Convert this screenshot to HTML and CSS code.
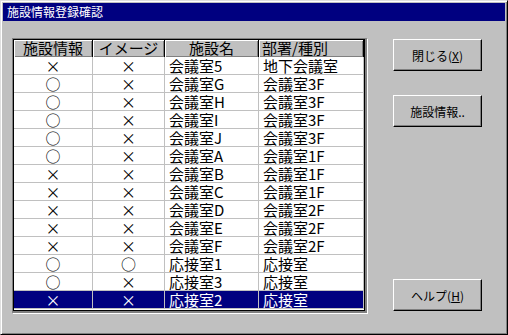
FILE: index.html
```html
<!DOCTYPE html>
<html lang="ja">
<head>
    <meta charset="UTF-8">
    <title>施設情報登録確認</title>
    <link rel="stylesheet" href="styles.css">
</head>
<body>
    <div class="window">
        <div class="titlebar">施設情報登録確認</div>
        <div class="client">
            <div class="list-frame">
                <div class="list">
                    <div class="row head">
                        <div class="cell center">施設情報</div>
                        <div class="cell center">イメージ</div>
                        <div class="cell center">施設名</div>
                        <div class="cell">部署/種別</div>
                    </div>
                    <div class="row"><div class="cell center">×</div><div class="cell center">×</div><div class="cell">会議室5</div><div class="cell">地下会議室</div></div>
                    <div class="row"><div class="cell center">○</div><div class="cell center">×</div><div class="cell">会議室G</div><div class="cell">会議室3F</div></div>
                    <div class="row"><div class="cell center">○</div><div class="cell center">×</div><div class="cell">会議室H</div><div class="cell">会議室3F</div></div>
                    <div class="row"><div class="cell center">○</div><div class="cell center">×</div><div class="cell">会議室I</div><div class="cell">会議室3F</div></div>
                    <div class="row"><div class="cell center">○</div><div class="cell center">×</div><div class="cell">会議室J</div><div class="cell">会議室3F</div></div>
                    <div class="row"><div class="cell center">○</div><div class="cell center">×</div><div class="cell">会議室A</div><div class="cell">会議室1F</div></div>
                    <div class="row"><div class="cell center">×</div><div class="cell center">×</div><div class="cell">会議室B</div><div class="cell">会議室1F</div></div>
                    <div class="row"><div class="cell center">×</div><div class="cell center">×</div><div class="cell">会議室C</div><div class="cell">会議室1F</div></div>
                    <div class="row"><div class="cell center">×</div><div class="cell center">×</div><div class="cell">会議室D</div><div class="cell">会議室2F</div></div>
                    <div class="row"><div class="cell center">×</div><div class="cell center">×</div><div class="cell">会議室E</div><div class="cell">会議室2F</div></div>
                    <div class="row"><div class="cell center">×</div><div class="cell center">×</div><div class="cell">会議室F</div><div class="cell">会議室2F</div></div>
                    <div class="row"><div class="cell center">○</div><div class="cell center">○</div><div class="cell">応接室1</div><div class="cell">応接室</div></div>
                    <div class="row"><div class="cell center">○</div><div class="cell center">×</div><div class="cell">応接室3</div><div class="cell">応接室</div></div>
                    <div class="row selected"><div class="cell center">×</div><div class="cell center">×</div><div class="cell">応接室2</div><div class="cell">応接室</div></div>
                </div>
            </div>
            <div class="buttons">
                <button class="btn">閉じる(<u>X</u>)</button>
                <button class="btn">施設情報..</button>
                <button class="btn help">ヘルプ(<u>H</u>)</button>
            </div>
        </div>
    </div>
</body>
</html>
```

FILE: styles.css
```css
body {
    margin: 0;
    background: #c0c0c0;
    font-family: "Noto Sans CJK JP", "DejaVu Sans", sans-serif;
}
.window {
    width: 508px;
    height: 335px;
    box-sizing: border-box;
    background: #c0c0c0;
    border: 1px solid;
    border-color: #dfdfdf #000 #000 #dfdfdf;
    box-shadow: inset 1px 1px #fff, inset -1px -1px #808080;
    padding: 2px;
    display: flex;
    flex-direction: column;
}
.titlebar {
    height: 18px;
    line-height: 18px;
    background: #000080;
    color: #fff;
    font-size: 12px;
    padding-left: 4px;
}
.client {
    flex: 1;
    display: flex;
    padding: 17px 0 0 9px;
}
.list-frame {
    align-self: flex-start;
    border: 1px solid;
    border-color: #808080 #fff #fff #808080;
    background: #808080;
    padding: 0 2px 2px 0;
}
.list {
    width: 350px;
    border: 1px solid #000;
    background: #fff;
    padding-bottom: 1px;
}
.row {
    display: grid;
    grid-template-columns: 79px 72px 94px 105px;
}
.cell {
    height: 18px;
    box-sizing: border-box;
    border-right: 1px solid #c0c0c0;
    border-bottom: 1px solid #c0c0c0;
    font-size: 15px;
    line-height: 17px;
    padding-left: 4px;
    white-space: nowrap;
}
.center {
    text-align: center;
    padding-left: 0;
}
.head .cell {
    height: 17px;
    line-height: 16px;
    background: #c0c0c0;
    border-bottom: 0;
    border-right: 1px solid #000;
    box-shadow: inset 1px 1px #fff, inset -1px -1px #808080;
    padding-left: 3px;
}
.head .center {
    padding-left: 0;
}
.selected .cell {
    background: #000080;
    color: #fff;
}
.buttons {
    display: flex;
    flex-direction: column;
    margin-left: 25px;
    padding: 1px 0 21px;
}
.btn {
    width: 89px;
    height: 32px;
    box-sizing: border-box;
    background: #c0c0c0;
    border: 1px solid;
    border-color: #fff #000 #000 #fff;
    box-shadow: inset -1px -1px #808080;
    font-family: "Noto Sans CJK JP", sans-serif;
    font-size: 12px;
    color: #000;
    padding: 0;
    margin-bottom: 24px;
}
.btn.help {
    margin-top: auto;
    margin-bottom: 0;
}
```
